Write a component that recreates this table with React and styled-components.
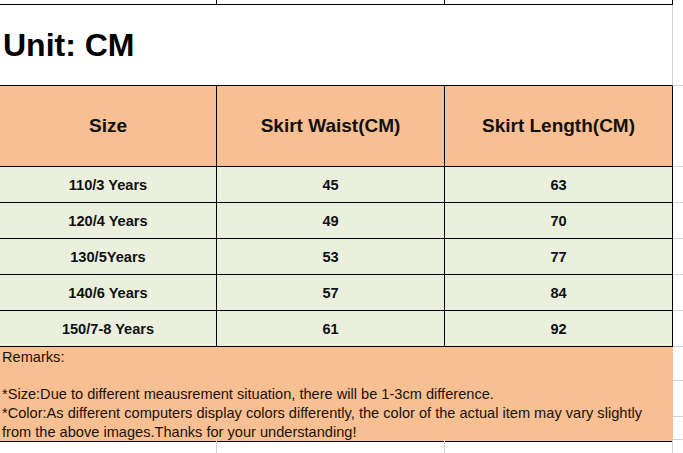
import React from "react";
import styled, { createGlobalStyle } from "styled-components";

const Global = createGlobalStyle`
  html, body { margin: 0; padding: 0; background: #fff; }
  #root { width: 683px; height: 453px; }
`;

const COLS = "217px 228px 228px 10px";
const PEACH = "#F8BF93";
const GREEN = "#EBF0DE";
const GRID = "#d2d2d2";

const Sheet = styled.div`
  width: 683px;
  height: 453px;
  overflow: hidden;
  background: #fff;
  font-family: "Liberation Sans", Arial, sans-serif;
  color: #111;
  display: flex;
  flex-direction: column;
`;

const Row = styled.div`
  display: grid;
  grid-template-columns: ${COLS};
  height: ${(p) => p.$h}px;
  flex: none;
`;

const Cell = styled.div`
  box-sizing: border-box;
  border-right: 1px solid #000;
  border-bottom: 1px solid #000;
  background: ${(p) => p.$bg || "transparent"};
  display: flex;
  align-items: center;
  justify-content: center;
  font-weight: bold;
  font-size: ${(p) => p.$fs || 14.6}px;
  white-space: nowrap;
`;

const StripCell = styled.div`
  box-sizing: border-box;
  border-right: 1px solid #000;
  border-bottom: 1px solid #000;
`;

const TitleCell = styled.div`
  grid-column: span 3;
  box-sizing: border-box;
  border-right: 1px solid ${GRID};
  border-bottom: 1px solid #000;
  display: flex;
  align-items: center;
  padding-left: 3px;
  padding-top: 1px;
  font-size: 32px;
  font-weight: bold;
  color: #000;
`;

const Gutter = styled.div`
  box-sizing: border-box;
  border-bottom: 1px solid ${(p) => (p.$line ? GRID : "transparent")};
`;

const GutterStack = styled.div`
  display: flex;
  flex-direction: column;
`;

const GutterPiece = styled.div`
  box-sizing: border-box;
  height: ${(p) => p.$h}px;
  flex: none;
  border-bottom: 1px solid ${GRID};
`;

const RemarksCell = styled.div`
  grid-column: span 3;
  box-sizing: border-box;
  background: ${PEACH};
  border-bottom: 1px solid #000;
  padding: 1px 0 0 2px;
  font-size: 14.6px;
  line-height: 18.7px;
  color: #1a1208;
  white-space: nowrap;
`;

const RemarkLine = styled.div`
  height: 18.7px;
`;

const EmptyCell = styled.div`
  box-sizing: border-box;
  border-right: 1px solid ${GRID};
`;

const rows = [
  ["110/3 Years", "45", "63"],
  ["120/4 Years", "49", "70"],
  ["130/5Years", "53", "77"],
  ["140/6 Years", "57", "84"],
  ["150/7-8 Years", "61", "92"],
];

export default function App() {
  return (
    <>
      <Global />
      <Sheet>
        <Row $h={5}>
          <StripCell />
          <StripCell />
          <StripCell />
          <Gutter />
        </Row>
        <Row $h={81}>
          <TitleCell>Unit: CM</TitleCell>
          <Gutter $line />
        </Row>
        <Row $h={81}>
          <Cell $bg={PEACH} $fs={19}>Size</Cell>
          <Cell $bg={PEACH} $fs={19}>Skirt Waist(CM)</Cell>
          <Cell $bg={PEACH} $fs={19}>Skirt Length(CM)</Cell>
          <Gutter $line />
        </Row>
        {rows.map((r) => (
          <Row $h={36} key={r[0]}>
            <Cell $bg={GREEN}>{r[0]}</Cell>
            <Cell $bg={GREEN}>{r[1]}</Cell>
            <Cell $bg={GREEN}>{r[2]}</Cell>
            <Gutter $line />
          </Row>
        ))}
        <Row $h={93}>
          <RemarksCell>
            <RemarkLine>Remarks:</RemarkLine>
            <RemarkLine />
            <RemarkLine>
              *Size:Due to different meausrement situation, there will be 1-3cm difference.
            </RemarkLine>
            <RemarkLine>
              *Color:As different computers display colors differently, the color of the actual item may vary slightly
            </RemarkLine>
            <RemarkLine>from the above images.Thanks for your understanding!</RemarkLine>
          </RemarksCell>
          <GutterStack>
            <GutterPiece $h={34} />
            <GutterPiece $h={36} />
            <GutterPiece $h={23} />
          </GutterStack>
        </Row>
        <Row $h={20}>
          <EmptyCell />
          <EmptyCell />
          <EmptyCell />
          <Gutter />
        </Row>
      </Sheet>
    </>
  );
}
